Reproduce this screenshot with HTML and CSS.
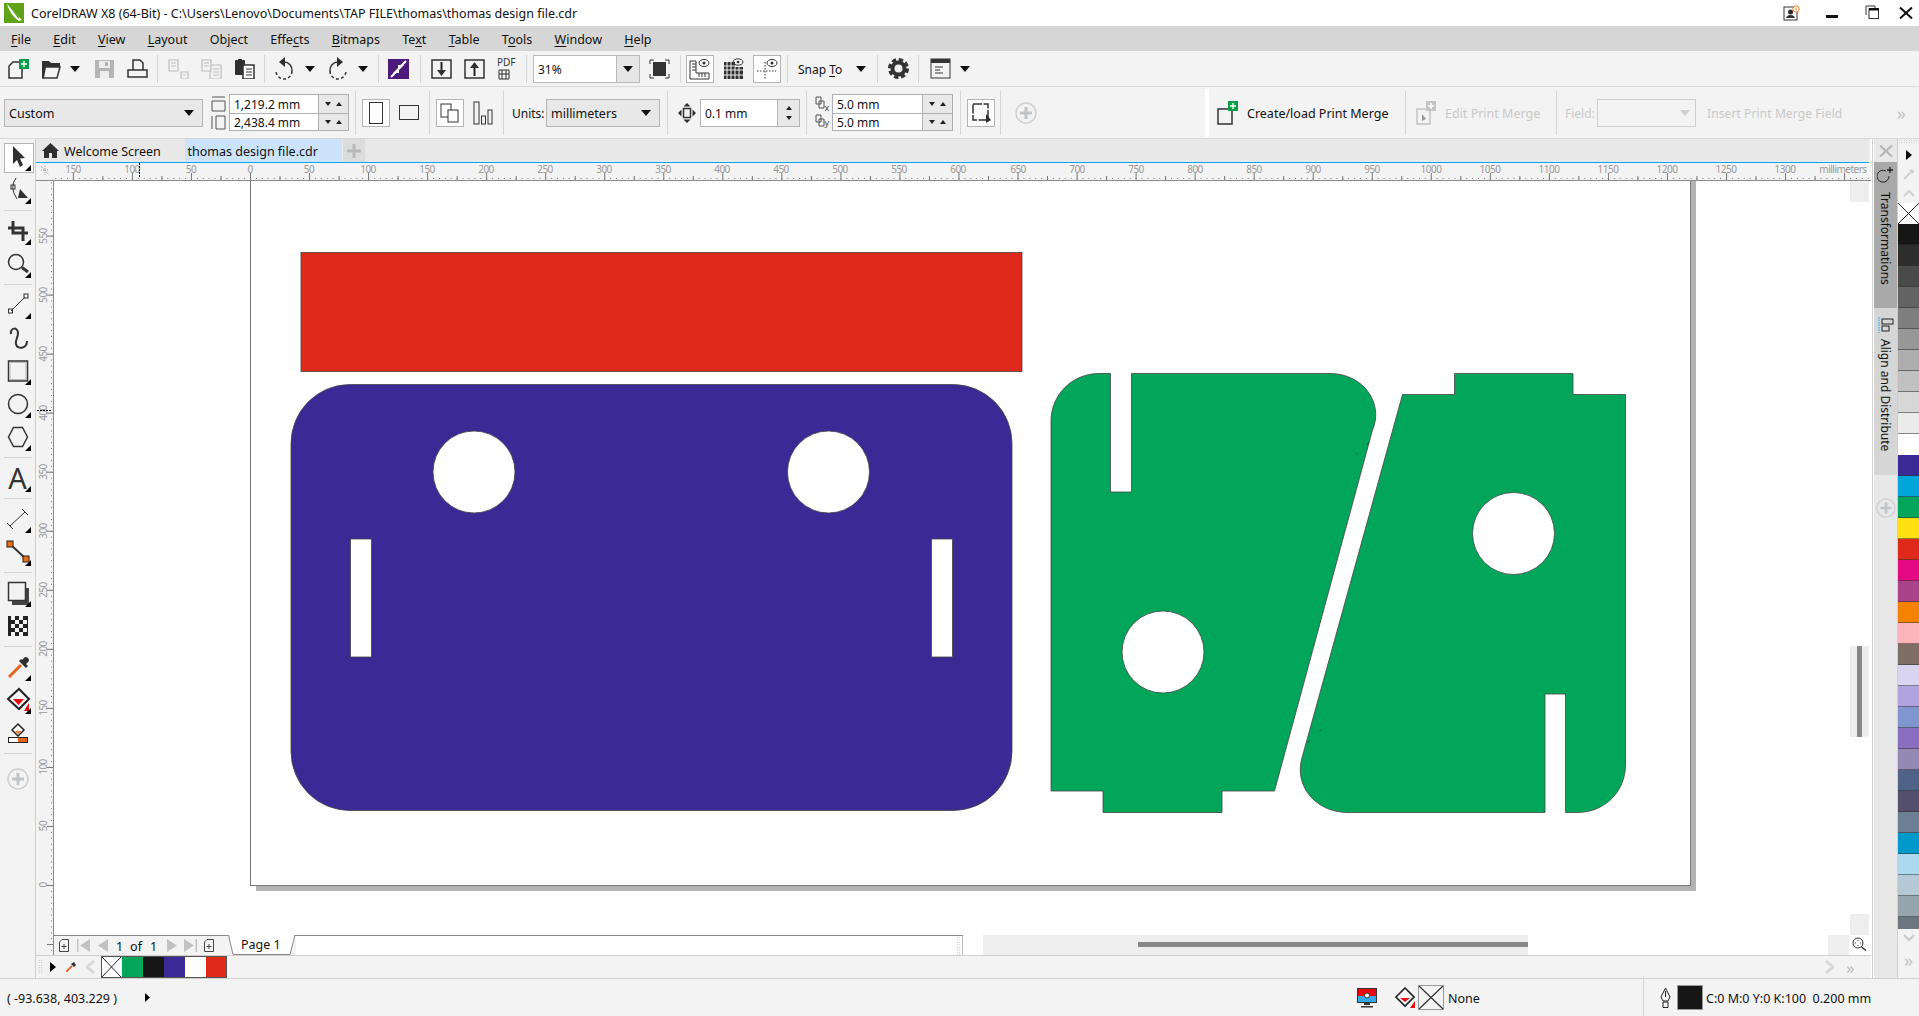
FILE: index.html
```html
<!DOCTYPE html>
<html lang="en">
<head>
<meta charset="utf-8">
<title>CorelDRAW X8</title>
<link rel="stylesheet" href="styles.css">
</head>
<body>
<div class="app">

<header class="titlebar">
  <svg class="logo" width="20" height="20" viewBox="0 0 20 20"><rect width="20" height="20" fill="#5fa319"/><path d="M3 1 L18 17 L15 18 Q6 12 3 1Z" fill="#fff"/><path d="M6 3 L15 15" class="lg"/></svg>
  <span class="title">CorelDRAW X8 (64-Bit) - C:\Users\Lenovo\Documents\TAP FILE\thomas\thomas design file.cdr</span>
  <div class="winbtns">
    <svg class="w-badge" width="17" height="16" viewBox="0 0 17 16"><rect x="1" y="2" width="13" height="13" class="s1"/><circle cx="7.500" cy="7" r="2.500" class="f"/><path d="M3 13 Q4 10 7.500 10 Q11 10 12 13Z" class="f"/><circle cx="13" cy="4" r="3.200" fill="#fff" stroke="#f47a20"/><path d="M13 2.500 V5.500" stroke="#f47a20"/></svg>
    <svg class="w-min" width="12" height="3" viewBox="0 0 12 3"><rect width="12" height="3" fill="#111"/></svg>
    <svg class="w-res" width="14" height="14" viewBox="0 0 14 14"><path d="M1 10 V1 H10 V3" class="s1"/><rect x="4" y="4" width="9.500" height="9.500" class="s1"/><rect x="4" y="3" width="10" height="2.500" fill="#111"/></svg>
    <svg class="w-close" width="14" height="12" viewBox="0 0 14 12"><path d="M1 0.500 L13 11.500 M13 0.500 L1 11.500" stroke="#111" stroke-width="2"/></svg>
  </div>
</header>

<nav class="menubar">
  <span><u>F</u>ile</span><span><u>E</u>dit</span><span><u>V</u>iew</span><span><u>L</u>ayout</span><span>Ob<u>j</u>ect</span><span>Effe<u>c</u>ts</span><span><u>B</u>itmaps</span><span>Te<u>x</u>t</span><span><u>T</u>able</span><span>T<u>o</u>ols</span><span><u>W</u>indow</span><span><u>H</u>elp</span>
</nav>

<div class="std">
  <div class="grp a1">
    <svg width="21" height="20" viewBox="0 0 21 20"><path d="M1 7 L5 3 H11 M1 7 V19 H14 V9" class="s"/><rect x="11" y="0" width="10" height="10" fill="#0a9d48"/><path d="M16 2 V8 M13 5 H19" stroke="#fff" stroke-width="1.400"/></svg>
    <svg width="21" height="20" viewBox="0 0 21 20"><path d="M1 2 H8 L10 4 H19 V8 H5 L3 19 H1Z" class="f"/><path d="M1 19 H16 L19 8 H5" class="s"/></svg>
    <i class="caret c-open"></i>
    <svg width="21" height="20" viewBox="0 0 21 20"><path d="M1 1 H20 V19 H1Z" fill="#b4b4b4"/><rect x="5" y="2" width="11" height="7" fill="#ececec"/><rect x="11" y="3" width="3" height="4" fill="#b4b4b4"/><rect x="6" y="12" width="9" height="7" fill="#ececec"/></svg>
    <svg width="21" height="20" viewBox="0 0 21 20"><path d="M6 11 V1 H13 L16 4 V11" class="s"/><path d="M1 11 H20 V18 H1Z" class="s"/></svg>
  </div><i class="sep"></i>
  <div class="grp a2">
    <svg width="21" height="20" viewBox="0 0 21 20"><path d="M1 1 H10 V12 H1Z M3 4 H8 M3 7 H8" class="sg"/><path d="M13 13 H20 V20 H13Z M15 16 H18" class="sg"/></svg>
    <svg width="21" height="20" viewBox="0 0 21 20"><path d="M1 1 H10 V12 H1Z M3 4 H8 M3 7 H8" class="sg"/><path d="M10 6 H20 V20 H9 V12 M12 10 H18 M12 13 H18 M12 16 H18" class="sg"/></svg>
    <svg width="21" height="20" viewBox="0 0 21 20"><rect x="1" y="1" width="10" height="15" rx="1" class="f"/><rect x="4" y="0" width="4" height="2" class="f"/><path d="M9 6 H20 V20 H9Z" fill="#fff" stroke="#333" stroke-width="1.500"/><path d="M12 10 H18 M12 13 H18 M12 16 H18" class="s1"/></svg>
  </div><i class="sep"></i>
  <div class="grp a3">
    <svg width="21" height="24" viewBox="0 0 21 24"><path d="M10 5 A8 8 0 0 1 18 14" class="s"/><path d="M18 14 A8 8 0 0 1 2 14" class="s dash"/><path d="M11 0 V10 L5 5Z" class="f"/></svg>
    <i class="caret c-undo"></i>
    <svg width="20" height="24" viewBox="0 0 20 24"><path d="M10 5 A8 8 0 0 0 2 14" class="s"/><path d="M2 14 A8 8 0 0 0 18 14" class="s dash"/><path d="M9 0 V10 L15 5Z" class="f"/></svg>
    <i class="caret c-redo"></i>
  </div><i class="sep"></i>
  <div class="grp a4">
    <svg width="21" height="20" viewBox="0 0 21 20"><rect width="21" height="20" fill="#4b1a7b"/><path d="M3 18 L8 13 M18 2 L13 7" stroke="#fff" stroke-width="2"/><path d="M11 8 V14 H5 Z M10 12 V6 H16Z" fill="#fff"/></svg>
  </div><i class="sep"></i>
  <div class="grp a5">
    <svg width="21" height="20" viewBox="0 0 21 20"><rect x="1" y="1" width="19" height="18" class="s"/><path d="M10.500 3 V12" stroke="#222" stroke-width="2"/><path d="M6 11 H15 L10.500 17Z" class="f"/></svg>
    <svg width="21" height="20" viewBox="0 0 21 20"><rect x="1" y="1" width="19" height="18" class="s"/><path d="M10.500 8 V17" stroke="#222" stroke-width="2"/><path d="M6 9 H15 L10.500 3Z" class="f"/></svg>
    <svg class="pdfic" width="26" height="24" viewBox="0 0 26 24"><text x="0" y="9" class="pdf">PDF</text><path d="M2 13 H12 V22 H2Z M5 13 V22 M9 13 V22 M2 17 H12" class="s1"/></svg>
  </div><i class="sep"></i>
  <div class="zoombox"><span>31%</span><b><i class="caret"></i></b></div>
  <div class="grp a6">
    <svg width="21" height="20" viewBox="0 0 21 20"><rect x="4" y="3" width="13" height="14" fill="#333"/><path d="M1 5 V1 H5 M16 1 H20 V5 M1 15 V19 H5 M16 19 H20 V15" class="s1"/></svg>
  </div><i class="sep"></i>
  <div class="grp a7">
    <div class="tbtn on"><svg width="22" height="22" viewBox="0 0 22 22"><path d="M1 3 H7 V15 H20 V21 H1Z" class="s1" /><path d="M3 6 H7 M3 9 H7 M3 12 H7 M10 15 V19 M13 15 V19 M16 15 V19" class="s1"/><ellipse cx="15" cy="5" rx="5" ry="3.500" class="s1"/><circle cx="15" cy="5" r="1.500" class="f"/></svg></div>
    <svg class="ic-grid" width="21" height="22" viewBox="0 0 21 22"><path d="M1 4 H12 V9 H20 V21 H1Z" class="f"/><path d="M4 4 V21 M8 4 V21 M12 9 V21 M16 9 V21 M1 8 H20 M1 12 H20 M1 17 H20" stroke="#f3f3f3"/><ellipse cx="15" cy="4" rx="5" ry="3.200" class="s1"/><circle cx="15" cy="4" r="1.300" class="f"/></svg>
    <div class="tbtn on g"><svg width="22" height="22" viewBox="0 0 22 22"><path d="M9 4 V21 M1 13 H20" class="s1 dots"/><ellipse cx="16" cy="5" rx="5" ry="3.500" class="s1"/><circle cx="16" cy="5" r="1.500" class="f"/></svg></div>
  </div><i class="sep"></i>
  <div class="grp a8"><span class="snap">Snap <u>T</u>o</span><i class="caret c-snap"></i></div><i class="sep"></i>
  <div class="grp a9">
    <svg width="21" height="21" viewBox="0 0 21 21"><circle cx="10.500" cy="10.500" r="6" fill="none" stroke="#333" stroke-width="4"/><circle cx="10.500" cy="10.500" r="9" fill="none" stroke="#333" stroke-width="3" stroke-dasharray="4.400 2.670"/></svg>
  </div><i class="sep"></i>
  <div class="grp a10">
    <svg width="21" height="21" viewBox="0 0 21 21"><rect x="1" y="1" width="19" height="19" class="s1"/><rect x="1" y="1" width="19" height="4" fill="#333"/><path d="M5 9 H13 M5 12 H10 M5 15 H13" class="s1"/></svg>
    <i class="caret c-launch"></i>
  </div>
</div>

<div class="prop">
  <div class="grp b1">
    <div class="drop custom"><span>Custom</span><i class="caret"></i></div>
    <svg class="dimic" width="15" height="34" viewBox="0 0 15 34"><path d="M1 1 H14 M1 5 H14 V15 H1Z" class="s1g"/><path d="M1 20 V33 M5 20 H14 V33 H5Z" class="s1g"/></svg>
    <div class="stack s-size">
      <div class="srow"><span>1,219.2 mm</span><b><i class="tri dn"></i><i class="tri up"></i></b></div>
      <div class="srow"><span>2,438.4 mm</span><b><i class="tri dn"></i><i class="tri up"></i></b></div>
    </div>
  </div><i class="sep tall"></i>
  <div class="grp b2">
    <div class="tbtn on"><svg width="14" height="22" viewBox="0 0 14 22"><rect x="0.500" y="0.500" width="13" height="21" class="s1"/></svg></div>
    <svg width="20" height="15" viewBox="0 0 20 15"><rect x="0.500" y="0.500" width="19" height="14" class="s1"/></svg>
  </div><i class="sep tall"></i>
  <div class="grp b3">
    <div class="tbtn on"><svg width="20" height="20" viewBox="0 0 20 20"><rect x="1" y="1" width="10" height="13" fill="#fff" class="s1"/><rect x="8" y="7" width="10" height="12" fill="#fff" stroke="#333"/></svg></div>
    <svg width="20" height="24" viewBox="0 0 20 24"><rect x="1" y="1" width="5" height="22" class="s1"/><rect x="8.500" y="15" width="4" height="8" class="s1"/><rect x="15" y="9" width="4" height="14" class="s1"/></svg>
  </div><i class="sep tall"></i>
  <div class="grp b4"><span class="lbl">Units:</span><div class="drop units"><span>millimeters</span><i class="caret"></i></div></div><i class="sep tall"></i>
  <div class="grp b5">
    <svg width="18" height="20" viewBox="0 0 18 20"><path d="M9 0 L12.500 3.500 H5.500Z M9 20 L5.500 16.500 H12.500Z M0 10 L3.500 6.500 V13.500Z M18 10 L14.500 13.500 V6.500Z" class="f"/><rect x="5.500" y="5.500" width="7" height="9" fill="#f3f3f3" stroke="#333" stroke-width="1.500"/></svg>
    <div class="nudge"><span>0.1 mm</span><b><i class="tri up"></i><i class="tri dn"></i></b></div>
  </div><i class="sep tall"></i>
  <div class="grp b6">
    <svg class="dupic" width="15" height="34" viewBox="0 0 15 34"><path d="M1 1 H6 V8 H1Z M4 5 H9 V12 H4Z M1 19 H6 V26 H1Z M4 23 H9 V30 H4Z" class="s1g"/><text x="9.500" y="15" class="xy">x</text><text x="9.500" y="30" class="xy">y</text></svg>
    <div class="stack s-dup">
      <div class="srow"><span>5.0 mm</span><b><i class="tri dn"></i><i class="tri up"></i></b></div>
      <div class="srow"><span>5.0 mm</span><b><i class="tri dn"></i><i class="tri up"></i></b></div>
    </div>
  </div><i class="sep tall"></i>
  <div class="grp b7">
    <div class="tbtn on"><svg width="20" height="22" viewBox="0 0 20 22"><rect x="2" y="2" width="15" height="16" stroke="#333" fill="none" stroke-dasharray="9 1.500" stroke-width="1.500"/><path d="M15 12 V21 L20 18Z" class="f"/></svg></div>
  </div><i class="sep tall"></i>
  <div class="grp b8">
    <svg width="22" height="22" viewBox="0 0 22 22"><circle cx="11" cy="11" r="10" class="pc"/><path d="M11 5 V17 M5 11 H17" class="pl"/></svg>
  </div>
  <i class="grip"></i>
  <div class="grp b9">
    <svg width="21" height="24" viewBox="0 0 21 24"><path d="M12 8 H1 V23 H15 V10" class="s"/><rect x="11" y="0" width="10" height="10" fill="#0a9d48"/><path d="M16 2 V8 M13 5 H19" stroke="#fff" stroke-width="1.400"/></svg>
    <span class="ptxt">Create/load Print Merge</span>
  </div><i class="sep tall"></i>
  <div class="grp b10 off">
    <svg width="20" height="24" viewBox="0 0 20 24"><path d="M11 8 H1 V23 H14 V10" fill="none" stroke="#c4c4c4" stroke-width="1.500"/><rect x="10" y="0" width="10" height="10" fill="#c4c4c4"/><path d="M15 2 V8 M12 5 H18" stroke="#fff" stroke-width="1.400"/><path d="M6 13 V20 L10 18Z" fill="#999"/></svg>
    <span class="ptxt">Edit Print Merge</span>
  </div><i class="sep tall"></i>
  <div class="grp b11 off">
    <span class="fld">Field:</span>
    <div class="combo"><i class="caret"></i></div>
    <span class="ins">Insert Print Merge Field</span>
    <span class="more">&raquo;</span>
  </div>
</div>

<div class="main">
  <aside class="toolbox">
    <div class="tool pick fly"><svg width="28" height="28" viewBox="0 0 28 28"><path d="M9 3 V21 L13 17 L16 24 L19 22 L16 15.500 L21 15Z" class="f"/></svg></div>
    <div class="tool fly"><svg width="28" height="28" viewBox="0 0 28 28"><path d="M12 2 Q5 11 13 23" class="s1"/><rect x="7" y="9" width="4" height="4" fill="#f3f3f3" class="s1"/><path d="M16 13 L24 22 H14Z" class="f"/></svg></div>
    <i class="tsep"></i>
    <div class="tool fly"><svg width="28" height="28" viewBox="0 0 28 28"><path d="M4 11 H19 V24 M9 4 V16 H24" fill="none" stroke="#333" stroke-width="3"/></svg></div>
    <div class="tool fly"><svg width="28" height="28" viewBox="0 0 28 28"><circle cx="12" cy="12" r="7.500" class="s"/><path d="M18 17.500 L24 22" stroke="#333" stroke-width="3"/></svg></div>
    <i class="tsep"></i>
    <div class="tool fly"><svg width="28" height="28" viewBox="0 0 28 28"><path d="M7 20 L21 6" class="s1"/><rect x="4.500" y="18" width="4" height="4" fill="#f3f3f3" class="s1"/><rect x="20" y="3" width="4" height="4" fill="#f3f3f3" class="s1"/></svg></div>
    <div class="tool"><svg width="28" height="28" viewBox="0 0 28 28"><path d="M7 10 C6 3 14 3 14 9 C14 14 11 16 12 20 C13 26 23 25 23 17" fill="none" stroke="#333" stroke-width="2"/></svg></div>
    <div class="tool fly"><svg width="28" height="28" viewBox="0 0 28 28"><rect x="4.500" y="4" width="19" height="20" fill="none" stroke="#333" stroke-width="1.500"/><rect x="6" y="5.500" width="16" height="17" fill="none" stroke="#bbb"/></svg></div>
    <div class="tool fly"><svg width="28" height="28" viewBox="0 0 28 28"><circle cx="14" cy="14" r="9.500" class="s"/></svg></div>
    <div class="tool fly"><svg width="28" height="28" viewBox="0 0 28 28"><path d="M4.500 14 L9.500 4.500 H18.500 L23.500 14 L18.500 23.500 H9.500Z" class="s"/></svg></div>
    <i class="tsep"></i>
    <div class="tool fly"><span class="bigA">A</span></div>
    <i class="tsep"></i>
    <div class="tool fly"><svg width="28" height="28" viewBox="0 0 28 28"><path d="M6 21 L21 7 M3 18 L9 24 M18 4 L24 10" class="s1"/></svg></div>
    <div class="tool fly"><svg width="28" height="28" viewBox="0 0 28 28"><path d="M7 7 L21 20" stroke="#333" stroke-width="2"/><rect x="3" y="3" width="6" height="6" fill="#f06a10" stroke="#222"/><rect x="19" y="18" width="6" height="6" fill="#f06a10" stroke="#222"/></svg></div>
    <i class="tsep"></i>
    <div class="tool fly"><svg width="28" height="28" viewBox="0 0 28 28"><path d="M8 9 V26 H25 V9Z" fill="#444"/><rect x="4.500" y="3.500" width="17" height="18" fill="#f3f3f3" stroke="#333" stroke-width="1.500"/></svg></div>
    <div class="tool"><svg width="28" height="28" viewBox="0 0 28 28"><rect x="4" y="4" width="20" height="20" fill="#222"/><path d="M7 4 h4 v4 h-4z M15 4 h4 v4 h-4z M11 8 h4 v4 h-4z M19 8 h4 v4 h-4z M7 12 h4 v4 h-4z M15 12 h4 v4 h-4z M11 16 h4 v4 h-4z M19 16 h4 v4 h-4z M7 20 h4 v4 h-4z M15 20 h4 v4 h-4z" fill="#f3f3f3"/></svg></div>
    <i class="tsep"></i>
    <div class="tool fly"><svg width="28" height="28" viewBox="0 0 28 28"><path d="M5 24 L17 12" stroke="#e2631a" stroke-width="3"/><path d="M15 8 L22 15 L24 13 L22 11 L25 8 Q25 4 21 4 L18 7 L17 6Z" class="f"/></svg></div>
    <div class="tool fly"><svg width="28" height="28" viewBox="0 0 28 28"><path d="M4 13 L15 3 L25 13 L15 23Z" fill="#f3f3f3" stroke="#222" stroke-width="2"/><path d="M9 13 H20 L14.500 19Z" fill="#e8090f"/><path d="M25 17 V25 H20Z" fill="#e8090f"/></svg></div>
    <div class="tool"><svg width="28" height="28" viewBox="0 0 28 28"><path d="M8 11 L14 5 L20 11 L14 17Z" fill="#fff" stroke="#222" stroke-width="1.500"/><path d="M11 12 H18 L14 15Z" fill="#f47a20"/><rect x="4.500" y="18.500" width="19" height="5" fill="#fff" stroke="#222"/><rect x="14" y="19" width="9" height="4" fill="#e2631a"/></svg></div>
    <i class="tsep"></i>
    <div class="tool tplus"><svg width="22" height="22" viewBox="0 0 22 22"><circle cx="11" cy="11" r="10" class="pc"/><path d="M11 5 V17 M5 11 H17" class="pl"/></svg></div>
  </aside>

  <section class="work">
    <div class="tabs">
      <div class="tab home"><svg width="17" height="15" viewBox="0 0 17 15"><path d="M8.500 0 L17 8 H15 V15 H10 V10 H7 V15 H2 V8 H0Z" class="f"/></svg><span>Welcome Screen</span></div>
      <div class="tab active"><span>thomas design file.cdr</span></div>
      <div class="tab newtab"><svg width="14" height="14" viewBox="0 0 14 14"><path d="M7 0 V14 M0 7 H14" stroke="#b9b9b9" stroke-width="3"/></svg></div>
    </div>
    <svg class="hruler" width="1835" height="18" viewBox="36 163 1835 18">
      <defs>
        <pattern id="hmin" x="250" y="163" width="5.904" height="18" patternUnits="userSpaceOnUse"><rect x="0" y="15" width="1" height="1" fill="#777"/></pattern>
        <pattern id="hmaj" x="250" y="163" width="59.04" height="18" patternUnits="userSpaceOnUse"><rect x="0" y="10" width="1" height="7" fill="#777"/><rect x="29.5" y="13" width="1" height="4" fill="#777"/></pattern>
        <pattern id="vmin" x="36" y="58.440" width="17" height="5.904" patternUnits="userSpaceOnUse"><rect x="15" y="0" width="1" height="1" fill="#777"/></pattern>
        <pattern id="vmaj" x="36" y="58.440" width="17" height="59.04" patternUnits="userSpaceOnUse"><rect x="11" y="0" width="6" height="1" fill="#777"/></pattern>
      </defs>
      <rect x="53" y="163" width="1818" height="17" fill="url(#hmin)"/>
      <rect x="53" y="163" width="1818" height="17" fill="url(#hmaj)"/>
      <rect x="36" y="180" width="1835" height="1" fill="#8a8a8a"/>
      <g class="rtxt">
        <text x="73" y="173">150</text><text x="132" y="173">100</text><text x="191" y="173">50</text><text x="250" y="173">0</text><text x="309" y="173">50</text><text x="368" y="173">100</text><text x="427" y="173">150</text><text x="486" y="173">200</text><text x="545" y="173">250</text><text x="604" y="173">300</text><text x="663" y="173">350</text><text x="722" y="173">400</text><text x="781" y="173">450</text><text x="840" y="173">500</text><text x="899" y="173">550</text><text x="958" y="173">600</text><text x="1018" y="173">650</text><text x="1077" y="173">700</text><text x="1136" y="173">750</text><text x="1195" y="173">800</text><text x="1254" y="173">850</text><text x="1313" y="173">900</text><text x="1372" y="173">950</text><text x="1431" y="173">1000</text><text x="1490" y="173">1050</text><text x="1549" y="173">1100</text><text x="1608" y="173">1150</text><text x="1667" y="173">1200</text><text x="1726" y="173">1250</text><text x="1785" y="173">1300</text><text x="1843" y="173">millimeters</text>
      </g>
      <path d="M139.500 163 V178" stroke="#000" stroke-dasharray="2 1"/>
      <path d="M41 166 L49 175 M41 170 H49 M45 166 V175" stroke="#999" stroke-dasharray="1 1" fill="none"/>
    </svg>
    <div class="stage">
      <svg class="vruler" width="17" height="774" viewBox="36 181 17 774">
        <rect x="36" y="181" width="17" height="774" fill="url(#vmin)"/>
        <rect x="36" y="181" width="17" height="774" fill="url(#vmaj)"/>
        <g class="rtxt">
          <text transform="translate(47,885) rotate(-90)">0</text><text transform="translate(47,826) rotate(-90)">50</text><text transform="translate(47,767) rotate(-90)">100</text><text transform="translate(47,708) rotate(-90)">150</text><text transform="translate(47,649) rotate(-90)">200</text><text transform="translate(47,590) rotate(-90)">250</text><text transform="translate(47,531) rotate(-90)">300</text><text transform="translate(47,472) rotate(-90)">350</text><text transform="translate(47,413) rotate(-90)">400</text><text transform="translate(47,354) rotate(-90)">450</text><text transform="translate(47,295) rotate(-90)">500</text><text transform="translate(47,236) rotate(-90)">550</text>
        </g>
        <path d="M37 410.500 H52" stroke="#000" stroke-dasharray="2 1"/>
      </svg>
      <div class="canvascol">
        <div class="canvas">
          <svg class="art" width="1818" height="754" viewBox="53 181 1818 754">
            <rect x="256" y="181" width="1440" height="710" fill="#b3b3b3"/>
            <rect x="250.500" y="180.500" width="1440" height="705" fill="#fff" stroke="#777"/>
            <rect class="ob" x="301" y="252.500" width="721" height="119" fill="#df291a"/>
            <rect class="ob" x="291" y="384.500" width="721" height="426" rx="59" fill="#3b2a95"/>
            <circle class="ob hole" cx="474" cy="472" r="41"/>
            <circle class="ob hole" cx="828.500" cy="472" r="41"/>
            <rect class="ob hole" x="350.500" y="539" width="21" height="118"/>
            <rect class="ob hole" x="931.500" y="539" width="21" height="118"/>
            <path class="ob" fill="#01a65b" d="M1051 421 C1051 395 1072 373.500 1099 373.500 H1110.500 V492 H1131.500 V373.500 H1330 C1364 373.500 1384 404 1372.500 430 L1274.500 791 H1222 V812.500 H1103 V791 H1051Z"/>
            <path class="ob" fill="#01a65b" d="M1402.500 394.500 H1454.500 V373.500 H1573 V394.500 H1625.500 V765 C1625.500 792 1604 812.500 1577.500 812.500 H1565.500 V694 H1545 V812.500 H1348 C1315 812.500 1293 785 1302.500 756 Z"/>
            <circle class="ob hole" cx="1163" cy="652" r="41"/>
            <circle class="ob hole" cx="1513.500" cy="533.500" r="41"/>
            <path d="M1356 455 l2 -2 M1367 445 l2 -3 M1319 732 l2 -2 M1308 743 l2 -3" stroke="#333" stroke-width="0.700" fill="none"/>
          </svg>
          <i class="vtrack t1"></i>
          <i class="vtrack t2"></i>
          <i class="vtrack t3"></i>
        </div>
        <div class="navrow">
          <div class="pager">
            <svg width="10" height="13" viewBox="0 0 10 13"><path d="M3 0.500 H9.500 V12.500 H0.500 V3Z M5 5 V10 M2.500 7.500 H7.500" fill="none" stroke="#444"/></svg>
            <svg width="13" height="13" viewBox="0 0 13 13"><path d="M0 0 H1.500 V13 H0Z M13 0 V13 L3 6.500Z" fill="#c2c2c2"/></svg>
            <svg width="10" height="13" viewBox="0 0 10 13"><path d="M10 0 V13 L0 6.500Z" fill="#c2c2c2"/></svg>
            <span class="pn n1">1</span><span class="pn n2">of</span><span class="pn n3">1</span>
            <svg width="10" height="13" viewBox="0 0 10 13"><path d="M0 0 V13 L10 6.500Z" fill="#c2c2c2"/></svg>
            <svg class="pg-last" width="13" height="13" viewBox="0 0 13 13"><path d="M13 0 H11.500 V13 H13Z M0 0 V13 L10 6.500Z" fill="#c2c2c2"/></svg>
            <svg class="pg-add" width="10" height="13" viewBox="0 0 10 13"><path d="M3 0.500 H9.500 V12.500 H0.500 V3Z M5 5 V10 M2.500 7.500 H7.500" fill="none" stroke="#444"/></svg>
            <svg class="ptab" width="68" height="20" viewBox="0 0 68 20"><path d="M0.500 0 L5 19.500 H62 L67 0" fill="#fff" stroke="#888"/><text x="13" y="14" class="pgt">Page 1</text></svg>
            <div class="ptrail"><i class="ngrip"></i></div>
          </div>
          <div class="htrack"><i class="hthumb"></i></div>
          <div class="cornerbox"></div>
          <svg class="zoomic" width="15" height="14" viewBox="0 0 15 14"><circle cx="6" cy="6" r="5" fill="none" stroke="#333"/><path d="M6 3 v1 M6 8 v1 M3 6 h1 M8 6 h1" stroke="#333"/><path d="M9.500 10 L14 13.500" stroke="#333" stroke-width="1.500"/></svg>
        </div>
      </div>
    </div>
    <div class="docpal">
      <i class="dgrip"></i>
      <svg class="dp-arrow" width="6" height="10" viewBox="0 0 6 10"><path d="M0 0 L6 5 L0 10Z" fill="#000"/></svg>
      <svg class="dp-drop" width="10" height="10" viewBox="0 0 10 10"><path d="M0 10 L6 4" stroke="#e2631a" stroke-width="1.800"/><path d="M5 2 L8 5 L10 3 L8 0Z" fill="#333"/></svg>
      <svg class="dp-prev" width="10" height="14" viewBox="0 0 10 14"><path d="M9 1 L2 7 L9 13" fill="none" stroke="#d5d5d5" stroke-width="2.500"/></svg>
      <div class="dswatches">
        <svg class="sw" width="21" height="22" viewBox="0 0 21 22"><rect width="21" height="22" fill="#fff"/><path d="M0 0 L21 22 M21 0 L0 22" stroke="#222"/></svg>
        <i class="sw dgreen"></i><i class="sw dblack"></i><i class="sw dblue"></i><i class="sw dwhite"></i><i class="sw dred"></i>
      </div>
      <svg class="dp-next" width="10" height="14" viewBox="0 0 10 14"><path d="M1 1 L8 7 L1 13" fill="none" stroke="#d5d5d5" stroke-width="2.500"/></svg>
      <span class="dp-more">&raquo;</span>
    </div>
  </section>

  <aside class="docker">
    <div class="dk-close"><svg width="14" height="12" viewBox="0 0 14 12"><path d="M1 0.500 L13 11.500 M13 0.500 L1 11.500" stroke="#b5b5b5" stroke-width="2"/></svg></div>
    <div class="dk-tab dk-trans">
      <svg width="18" height="20" viewBox="0 0 18 20"><path d="M9 7 A6 6 0 1 0 12 12" fill="none" stroke="#222"/><path d="M13 3 V9 M10 6 H16" stroke="#222" stroke-width="1.300"/></svg>
      <span>Transformations</span>
    </div>
    <div class="dk-tab dk-align">
      <svg width="16" height="17" viewBox="0 0 16 17"><path d="M1 0 V16" stroke="#18a0e8" stroke-dasharray="1.500 1"/><rect x="4" y="2" width="11" height="5" fill="none" stroke="#222" /><rect x="4" y="9" width="7" height="5" fill="none" stroke="#222"/></svg>
      <span>Align and Distribute</span>
    </div>
    <div class="dk-plus"><svg width="20" height="20" viewBox="0 0 22 22"><circle cx="11" cy="11" r="10" class="pc"/><path d="M11 5 V17 M5 11 H17" class="pl"/></svg></div>
  </aside>

  <aside class="palette">
    <i class="pgrip"></i>
    <div class="pcell"><svg width="6" height="10" viewBox="0 0 6 10"><path d="M0 0 L6 5 L0 10Z" fill="#000"/></svg></div>
    <div class="pcell"><svg width="12" height="12" viewBox="0 0 12 12"><path d="M1 11 L7 5" stroke="#cfcfcf" stroke-width="2"/><path d="M6 3 L9 6 L11 4 L9 1Z" fill="#cfcfcf"/></svg></div>
    <div class="pcell"><svg width="12" height="8" viewBox="0 0 12 8"><path d="M1 7 L6 2 L11 7" fill="none" stroke="#d0d0d0" stroke-width="2"/></svg></div>
    <div class="swatches">
      <svg class="ps none" width="21" height="21" viewBox="0 0 21 21"><rect width="21" height="21" fill="#fff"/><path d="M0 0 L21 21 M21 0 L0 21" stroke="#222"/></svg>
      <i class="ps c01"></i><i class="ps c02"></i><i class="ps c03"></i><i class="ps c04"></i><i class="ps c05"></i><i class="ps c06"></i><i class="ps c07"></i><i class="ps c08"></i><i class="ps c09"></i><i class="ps c10"></i><i class="ps c11"></i><i class="ps c12"></i><i class="ps c13"></i><i class="ps c14"></i><i class="ps c15"></i><i class="ps c16"></i><i class="ps c17"></i><i class="ps c18"></i><i class="ps c19"></i><i class="ps c20"></i><i class="ps c21"></i><i class="ps c22"></i><i class="ps c23"></i><i class="ps c24"></i><i class="ps c25"></i><i class="ps c26"></i><i class="ps c27"></i><i class="ps c28"></i><i class="ps c29"></i><i class="ps c30"></i><i class="ps c31"></i><i class="ps c32"></i><i class="ps c33"></i><i class="ps c34 last"></i>
    </div>
    <div class="pcell pdown"><svg width="12" height="8" viewBox="0 0 12 8"><path d="M1 1 L6 6 L11 1" fill="none" stroke="#c8c8c8" stroke-width="2"/></svg></div>
    <div class="pmore">&raquo;</div>
  </aside>
</div>

<footer class="status">
  <span class="coords">( -93.638, 403.229 )</span>
  <svg class="st-arrow" width="5" height="9" viewBox="0 0 5 9"><path d="M0 0 L5 4.500 L0 9Z" fill="#000"/></svg>
  <svg class="st-mon" width="20" height="20" viewBox="0 0 20 20"><rect x="0.500" y="0.500" width="19" height="14" fill="#e8090f" stroke="#333"/><rect x="1" y="8" width="18" height="6" fill="#35a9e8"/><circle cx="10" cy="7.500" r="2.500" fill="#fff" stroke="#333"/><path d="M7 15 H13 V17 H7Z M4 18 H16 V19.500 H4Z" fill="#333"/></svg>
  <svg class="st-fill" width="20" height="22" viewBox="0 0 20 22"><path d="M1 10 L10 1 L19 10 L10 19Z" fill="#fff" stroke="#222" stroke-width="1.600"/><path d="M5 11 H15 L10 15Z" fill="#e8090f"/><path d="M20 14 V21 H15Z" fill="#e8090f"/></svg>
  <svg class="st-none" width="26" height="25" viewBox="0 0 26 25"><rect x="0.500" y="0.500" width="25" height="24" fill="#f3f3f3" stroke="#999"/><path d="M1 1 L25 24 M25 1 L1 24" stroke="#333" stroke-width="1.200"/></svg>
  <span class="st-text">None</span>
  <i class="sep tall st-sep"></i>
  <svg class="st-pen" width="11" height="20" viewBox="0 0 11 20"><path d="M5.500 0 L10 9 L8 13 H3 L1 9Z M3 14 H8 V19.500 H3Z" fill="#f3f3f3" stroke="#222"/><path d="M5.500 3 V9" stroke="#222"/></svg>
  <i class="st-black"></i>
  <span class="st-cmyk">C:0 M:0 Y:0 K:100&nbsp; 0.200 mm</span>
</footer>

</div>
</body>
</html>
```
FILE: styles.css
```css
* { box-sizing: border-box; }
html, body { margin: 0; padding: 0; background: #f3f3f3; }
body { font-family: "Noto Sans", "Open Sans", sans-serif; font-size: 12px; color: #111; }
i { display: block; font-style: normal; flex: none; }
svg { display: block; flex: none; }
u { text-decoration-thickness: 1px; text-underline-offset: 2px; }

.s { fill: none; stroke: #333; stroke-width: 1.5; }
.s1 { fill: none; stroke: #333; stroke-width: 1; }
.s1g { fill: none; stroke: #555; stroke-width: 1; }
.sg { fill: none; stroke: #bdbdbd; stroke-width: 1.2; }
.f { fill: #2f2f2f; }
.dash { stroke-dasharray: 3 2.2; }
.dots { stroke-dasharray: 1.500 1.500; }
.pc { fill: none; stroke: #cfcfcf; stroke-width: 1.5; }
.pl { fill: none; stroke: #bfc4c9; stroke-width: 3; }
.lg { stroke: #5fa319; stroke-width: 1.5; fill: none; }

.app { width: 1919px; height: 1016px; display: flex; flex-direction: column; overflow: hidden; background: #f3f3f3; }

/* title bar */
.titlebar { height: 26px; background: #fff; display: flex; align-items: center; padding-left: 4px; flex: none; }
.title { margin-left: 7px; padding-top: 1px; font-size: 12.5px; white-space: nowrap; color: #111; }
.winbtns { margin-left: auto; display: flex; align-items: center; height: 100%; }
.w-badge { margin-right: 26px; }
.w-min { margin-right: 27px; margin-top: 7px; }
.w-res { margin-right: 20px; margin-top: -2px; }
.w-close { margin-right: 6px; }

/* menu bar */
.menubar { height: 25px; background: #d6d6d6; display: flex; align-items: center; gap: 22.3px; padding-left: 11px; padding-top: 1px; flex: none; font-size: 12.5px; }

/* standard toolbar */
.std { height: 36px; display: flex; align-items: center; border-bottom: 1px solid #d8d8d8; flex: none; }
.grp { display: flex; align-items: center; flex: none; height: 100%; }
.sep { width: 1px; height: 28px; background: #d6d6d6; }
.sep.tall { height: 44px; }
.caret { width: 0; height: 0; border-left: 5px solid transparent; border-right: 5px solid transparent; border-top: 6px solid #111; }

.a1 { width: 157px; padding-left: 8px; gap: 12px; }
.c-open { margin: 0 2px 0 -4px; }
.a2 { width: 106px; padding-left: 10px; gap: 12px; }
.a3 { width: 113px; padding-left: 9px; }
.c-undo { margin: 0 13px 0 10px; }
.c-redo { margin-left: 10px; }
.a4 { width: 41px; padding-left: 9px; }
.a5 { width: 105px; padding-left: 10px; gap: 12px; }
.pdfic { margin-right: -5px; }
.zoombox { width: 107px; height: 28px; margin-left: 6px; display: flex; border: 1px solid #b9b9b9; background: #fff; font-size: 12px; flex: none; }
.zoombox span { flex: 1; line-height: 28px; padding-left: 4px; }
.zoombox b { width: 23px; background: #e6e6e6; border-left: 1px solid #b9b9b9; display: flex; align-items: center; justify-content: center; }
.a6 { width: 40px; padding-left: 9px; }
.a7 { width: 106px; padding-left: 5px; }
.ic-grid { margin: 0 9px; }
.tbtn { width: 28px; height: 28px; background: #fff; border: 1px solid #b5b5b5; display: flex; align-items: center; justify-content: center; flex: none; }
.a8 { width: 89px; padding-left: 10px; }
.snap { white-space: nowrap; width: 47px; padding-top: 2px; }
.c-snap { margin-left: 11px; }
.a9 { width: 40px; padding-left: 10px; }
.a10 { padding-left: 11px; }
.c-launch { margin-left: 9px; }
.pdf { font: 10px "Noto Sans", sans-serif; fill: #333; }

/* property bar */
.prop { height: 52px; display: flex; align-items: center; border-bottom: 1px solid #d8d8d8; flex: none; font-size: 12px; }
.drop { height: 28px; background: #e8e8e8; border: 1px solid #b5b5b5; display: flex; align-items: center; justify-content: space-between; padding: 0 8px 0 4px; flex: none; font-size: 12.5px; }
.drop span { padding-top: 2px; }
.custom { width: 199px; }
.units { width: 114px; margin-left: 2px; }
.b1 { width: 355px; padding-left: 4px; }
.dimic { margin: 0 3px 0 8px; }
.stack { border: 1px solid #b0b0b0; background: #fff; flex: none; }
.s-size { width: 120px; }
.s-dup { width: 121px; margin-left: 2px; }
.srow { height: 17.500px; display: flex; align-items: center; }
.srow + .srow { border-top: 1px solid #b0b0b0; }
.srow span { flex: 1; padding-left: 4px; padding-top: 2px; line-height: 16px; white-space: nowrap; }
.srow b { width: 30px; height: 100%; background: #e8e8e8; border-left: 1px solid #b0b0b0; display: flex; align-items: center; justify-content: space-around; padding: 0 3px; }
.tri { width: 0; height: 0; border-left: 3.5px solid transparent; border-right: 3.5px solid transparent; }
.tri.dn { border-top: 4px solid #222; }
.tri.up { border-bottom: 4px solid #222; }
.b2 { width: 73px; padding-left: 6px; gap: 9px; }
.b3 { width: 73px; padding-left: 6px; gap: 9px; }
.b4 { width: 163px; padding-left: 8px; }
.lbl { width: 32px; padding-top: 2px; }
.b5 { width: 138px; padding-left: 10px; }
.nudge { width: 100px; height: 28px; margin-left: 4px; border: 1px solid #b5b5b5; background: #fff; display: flex; }
.nudge span { flex: 1; line-height: 28px; padding-left: 4px; }
.nudge b { width: 22px; background: #e8e8e8; border-left: 1px solid #b5b5b5; display: flex; flex-direction: column; align-items: center; justify-content: space-evenly; }
.b6 { width: 153px; padding-left: 8px; }
.xy { font: 9px "Noto Sans", sans-serif; fill: #444; }
.b7 { width: 39px; padding-left: 6px; }
.b8 { width: 204px; padding-left: 14px; }
.grip { width: 4px; height: 48px; background: #fff; flex: none; }
.b9 { width: 196px; padding-left: 8px; }
.ptxt { margin-left: 9px; padding-top: 2px; font-size: 12.5px; white-space: nowrap; }
.b10 { width: 150px; padding-left: 10px; }
.off { color: #c9c9c9; }
.b11 { flex: 1; padding-left: 8px; }
.fld { width: 32px; padding-top: 2px; }
.combo { width: 99px; height: 28px; border: 1px solid #cfcfcf; display: flex; align-items: center; justify-content: flex-end; padding-right: 5px; margin-right: 11px; }
.combo .caret { border-top-color: #cfcfcf; }
.ins { white-space: nowrap; letter-spacing: 0.1px; padding-top: 2px; }
.more { margin-left: auto; margin-right: 13px; font-size: 18px; color: #c4c4c4; line-height: 18px; }

/* main area */
.main { flex: 1; display: flex; min-height: 0; }

.toolbox { width: 36px; flex: none; border-right: 1px solid #cfcfcf; padding-top: 1.500px; display: flex; flex-direction: column; }
.tool { height: 33px; width: 36px; display: flex; align-items: center; padding-left: 4px; position: relative; flex: none; }
.pick svg { position: relative; }
.pick::before { content: ""; position: absolute; left: 4px; top: 2.500px; width: 28px; height: 28px; background: #fff; border: 1px solid #b5b5b5; }
.fly::after { content: ""; position: absolute; right: 5px; bottom: 3px; width: 0; height: 0; border-left: 6px solid transparent; border-bottom: 6px solid #000; }
.tsep { width: 28px; height: 1px; background: #d6d6d6; margin: 3px 0 4px 4px; }
.bigA { font-size: 29px; line-height: 28px; width: 28px; text-align: center; color: #333; padding-right: 1px; }
.tplus { margin-top: 5px; padding-left: 7px; }

.work { width: 1835px; flex: none; display: flex; flex-direction: column; min-height: 0; }
.tabs { height: 24px; display: flex; background: #e8e8e8; border-bottom: 1px solid #00a8f0; width: 1833px; flex: none; font-size: 12.5px; }
.tab { height: 23px; display: flex; align-items: center; flex: none; }
.tab span { padding-top: 2px; }
.home { width: 148.500px; padding-left: 6px; gap: 5px; }
.active { width: 157px; background: #cce4fb; padding-left: 3px; }
.newtab { width: 22px; margin-left: 1px; background: #dcdcdc; justify-content: center; }
.hruler { flex: none; background: #f3f3f3; }
.rtxt text { font: 10px "Noto Sans", sans-serif; fill: #999; text-anchor: middle; letter-spacing: -0.5px; }
.stage { flex: 1; display: flex; min-height: 0; }
.vruler { background: #f3f3f3; }
.canvascol { width: 1818px; display: flex; flex-direction: column; border-left: 0; }
.canvas { height: 754px; background: #fff; position: relative; overflow: hidden; flex: none; }
.canvas::after { content: ""; position: absolute; left: 0; top: 0; bottom: 0; width: 1px; background: #8a8a8a; }
.art { position: absolute; left: 0; top: 0; }
.ob { stroke: #444; stroke-width: 0.8; }
.hole { fill: #fff; }
.vtrack { position: absolute; left: 1797px; width: 19px; background: #eee; }
.t1 { top: 0; height: 21px; }
.t2 { top: 465px; height: 91px; background: linear-gradient(90deg, #eee 7px, #888 7px, #888 12px, #eee 12px); }
.t3 { top: 733px; height: 21px; }

.navrow { height: 20px; display: flex; align-items: stretch; background: #fff; flex: none; }
.pager { width: 910px; height: 20px; display: flex; align-items: center; gap: 8px; padding-left: 5px; background: #f3f3f3; border-top: 1px solid #8a8a8a; border-left: 1px solid #8a8a8a; flex: none; font-size: 12.5px; }
.pn { text-align: center; white-space: nowrap; padding-top: 2px; }
.n1 { width: 6px; }
.n2 { width: 12px; }
.n3 { width: 6px; margin-right: 3px; }
.pg-last, .pg-add { margin-left: -1px; }
.ptab { margin-left: 6px; margin-top: -1px; }
.pgt { font: 12.5px "Noto Sans", sans-serif; fill: #111; }
.ptrail { flex: 1; align-self: stretch; margin-left: -8px; background: #fff; display: flex; justify-content: flex-end; border-right: 1px solid #bbb; }
.ngrip { width: 6px; background: radial-gradient(circle, #aaa 0.7px, transparent 0.8px) 0 0 / 2.500px 2.500px; }
.htrack { width: 545px; margin-left: 20px; background: #eee; position: relative; flex: none; }
.hthumb { position: absolute; right: 0; top: 7px; width: 390px; height: 5px; background: #888; }
.cornerbox { width: 21px; margin-left: 300px; background: #eee; flex: none; }
.zoomic { margin: 2px 0 0 3px; }

.docpal { height: 23px; display: flex; align-items: center; border-top: 1px solid #d0d0d0; flex: none; background: #f3f3f3; }
.dgrip { width: 5px; height: 16px; margin-left: 2px; background: radial-gradient(circle, #aaa 0.7px, transparent 0.8px) 0 0 / 2.500px 2.500px; }
.dp-arrow { margin-left: 7px; }
.dp-drop { margin-left: 10px; }
.dp-prev { margin-left: 9px; }
.dswatches { display: flex; margin-left: 6px; height: 22px; }
.sw { width: 21px; height: 22px; }
.dgreen { background: #01a65b; }
.dblack { background: #161616; }
.dblue { background: #3b2a95; }
.dwhite { background: #fff; }
.dred { background: #df291a; }
.dswatches { outline: 1px solid #555; outline-offset: -1px; }
.dp-next { margin-left: 1598px; }
.dp-more { margin-left: 11px; color: #bbb; font-size: 17px; line-height: 17px; }

.docker { flex: none; width: 26px; background: linear-gradient(90deg, #fff 1px, #d0d0d0 1px, #d0d0d0 2px, #fff 2px, #fff 3px, #e8e8e8 3px); padding-left: 3px; display: flex; flex-direction: column; }
.dk-close { height: 23px; display: flex; align-items: center; justify-content: center; }
.dk-tab { width: 23px; display: flex; flex-direction: column; align-items: center; flex: none; }
.dk-tab span { writing-mode: vertical-rl; font-size: 12px; white-space: nowrap; line-height: 23px; }
.dk-trans { height: 146px; background: #a9a9a9; padding-top: 2px; }
.dk-trans span { margin-top: 7.500px; }
.dk-align { height: 167px; background: #d6d6d6; padding-top: 9px; }
.dk-align span { margin-top: 5px; }
.dk-plus { margin-top: 23px; display: flex; justify-content: center; }

.palette { flex: 1; display: flex; flex-direction: column; border-left: 1px solid #cfcfcf; min-width: 0; }
.pgrip { height: 6px; background: radial-gradient(circle, #aaa 0.7px, transparent 0.8px) 0 0 / 2.500px 2.500px; }
.pcell { height: 19.300px; display: flex; align-items: center; justify-content: center; flex: none; }
.swatches { height: 726px; overflow: hidden; flex: none; }
.ps { height: 21px; width: 100%; border-bottom: 1px solid rgba(50, 50, 50, 0.55); }
svg.ps { border: 0; }
.c01 { background: #161616; } .c02 { background: #2d2d2d; } .c03 { background: #4a4a4a; } .c04 { background: #636363; }
.c05 { background: #7f7f7f; } .c06 { background: #979797; } .c07 { background: #adadad; } .c08 { background: #c1c1c1; }
.c09 { background: #d7d7d7; } .c10 { background: #ebebeb; } .c11 { background: #fff; border-bottom: 0; } .c12 { background: #3b2a95; }
.c13 { background: #00a5d9; } .c14 { background: #01a65b; } .c15 { background: #fde010; } .c16 { background: #df291a; }
.c17 { background: #e30a83; } .c18 { background: #a9448b; } .c19 { background: #f58200; } .c20 { background: #fcb5bb; }
.c21 { background: #7e6e66; } .c22 { background: #d9d5f1; } .c23 { background: #b1a3df; } .c24 { background: #7f96d0; }
.c25 { background: #8a6fc0; } .c26 { background: #9488b5; } .c27 { background: #4f6287; } .c28 { background: #544f6a; }
.c29 { background: #6d7f93; } .c30 { background: #0099cc; } .c31 { background: #acd9f0; } .c32 { background: #b5c8d5; }
.c33 { background: #95a5ad; } .c34 { background: #6b7680; border-bottom: 0; }
.pdown { height: 18px; }
.pmore { text-align: center; color: #c4c4c4; font-size: 18px; line-height: 26px; }

/* status bar */
.status { height: 38px; flex: none; display: flex; align-items: center; border-top: 1px solid #d0d0d0; font-size: 12.5px; background: #f3f3f3; }
.coords { margin-left: 7px; width: 110px; white-space: nowrap; padding-top: 2px; }
.st-arrow { margin-left: 28px; }
.st-mon { margin-left: 1207px; }
.st-fill { margin-left: 18px; }
.st-none { margin-left: 3px; }
.st-text { margin-left: 4px; width: 32px; padding-top: 2px; }
.st-sep { margin-left: 163px; }
.st-pen { margin-left: 16px; }
.st-black { width: 26px; height: 25px; background: #161616; border: 1px solid #999; margin-left: 6px; }
.st-cmyk { margin-left: 3px; white-space: nowrap; padding-top: 2px; }
```
